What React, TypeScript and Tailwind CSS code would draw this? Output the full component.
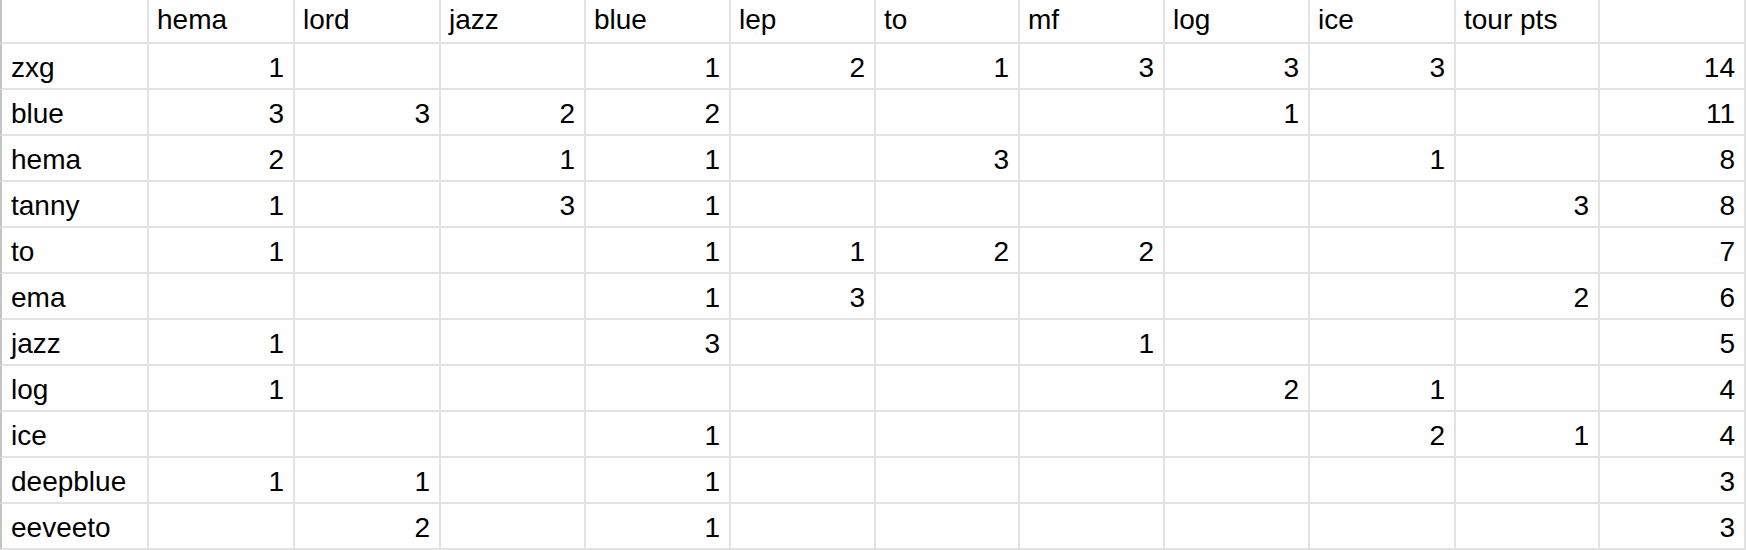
const headers = ["", "hema", "lord", "jazz", "blue", "lep", "to", "mf", "log", "ice", "tour pts", ""];

const rows: (string | number)[][] = [
  ["zxg", 1, "", "", 1, 2, 1, 3, 3, 3, "", 14],
  ["blue", 3, 3, 2, 2, "", "", "", 1, "", "", 11],
  ["hema", 2, "", 1, 1, "", 3, "", "", 1, "", 8],
  ["tanny", 1, "", 3, 1, "", "", "", "", "", 3, 8],
  ["to", 1, "", "", 1, 1, 2, 2, "", "", "", 7],
  ["ema", "", "", "", 1, 3, "", "", "", "", 2, 6],
  ["jazz", 1, "", "", 3, "", "", 1, "", "", "", 5],
  ["log", 1, "", "", "", "", "", "", 2, 1, "", 4],
  ["ice", "", "", "", 1, "", "", "", "", 2, 1, 4],
  ["deepblue", 1, 1, "", 1, "", "", "", "", "", "", 3],
  ["eeveeto", "", 2, "", 1, "", "", "", "", "", "", 3],
];

function Cell({ value, first, header }: { value: string | number; first: boolean; header?: boolean }) {
  const isNum = typeof value === "number";
  return (
    <div
      className={`flex items-end border-r-2 border-b-2 border-[#e2e2e2] whitespace-nowrap overflow-hidden ${
        header ? "h-[44px] pb-[6px]" : "h-[46px] pb-[4px]"
      } ${first ? "border-l-2 border-l-[#c4c4c4] pl-[9px]" : "pl-[8px]"} ${
        isNum ? "justify-end pr-[9px]" : "justify-start"
      }`}
    >
      <span className="leading-[32px]">{value}</span>
    </div>
  );
}

export default function App() {
  return (
    <div className="w-[1747px] h-[550px] bg-white text-black text-[28px] font-['Liberation_Sans',Arial,sans-serif] overflow-hidden">
      <div className="grid grid-cols-[149px_146px_146px_145px_145px_145px_144px_145px_145px_146px_144px_146px]">
        {headers.map((h, i) => (
          <Cell key={`h${i}`} value={h} first={i === 0} header />
        ))}
        {rows.map((row, r) =>
          row.map((v, c) => <Cell key={`${r}-${c}`} value={v} first={c === 0} />)
        )}
      </div>
    </div>
  );
}
